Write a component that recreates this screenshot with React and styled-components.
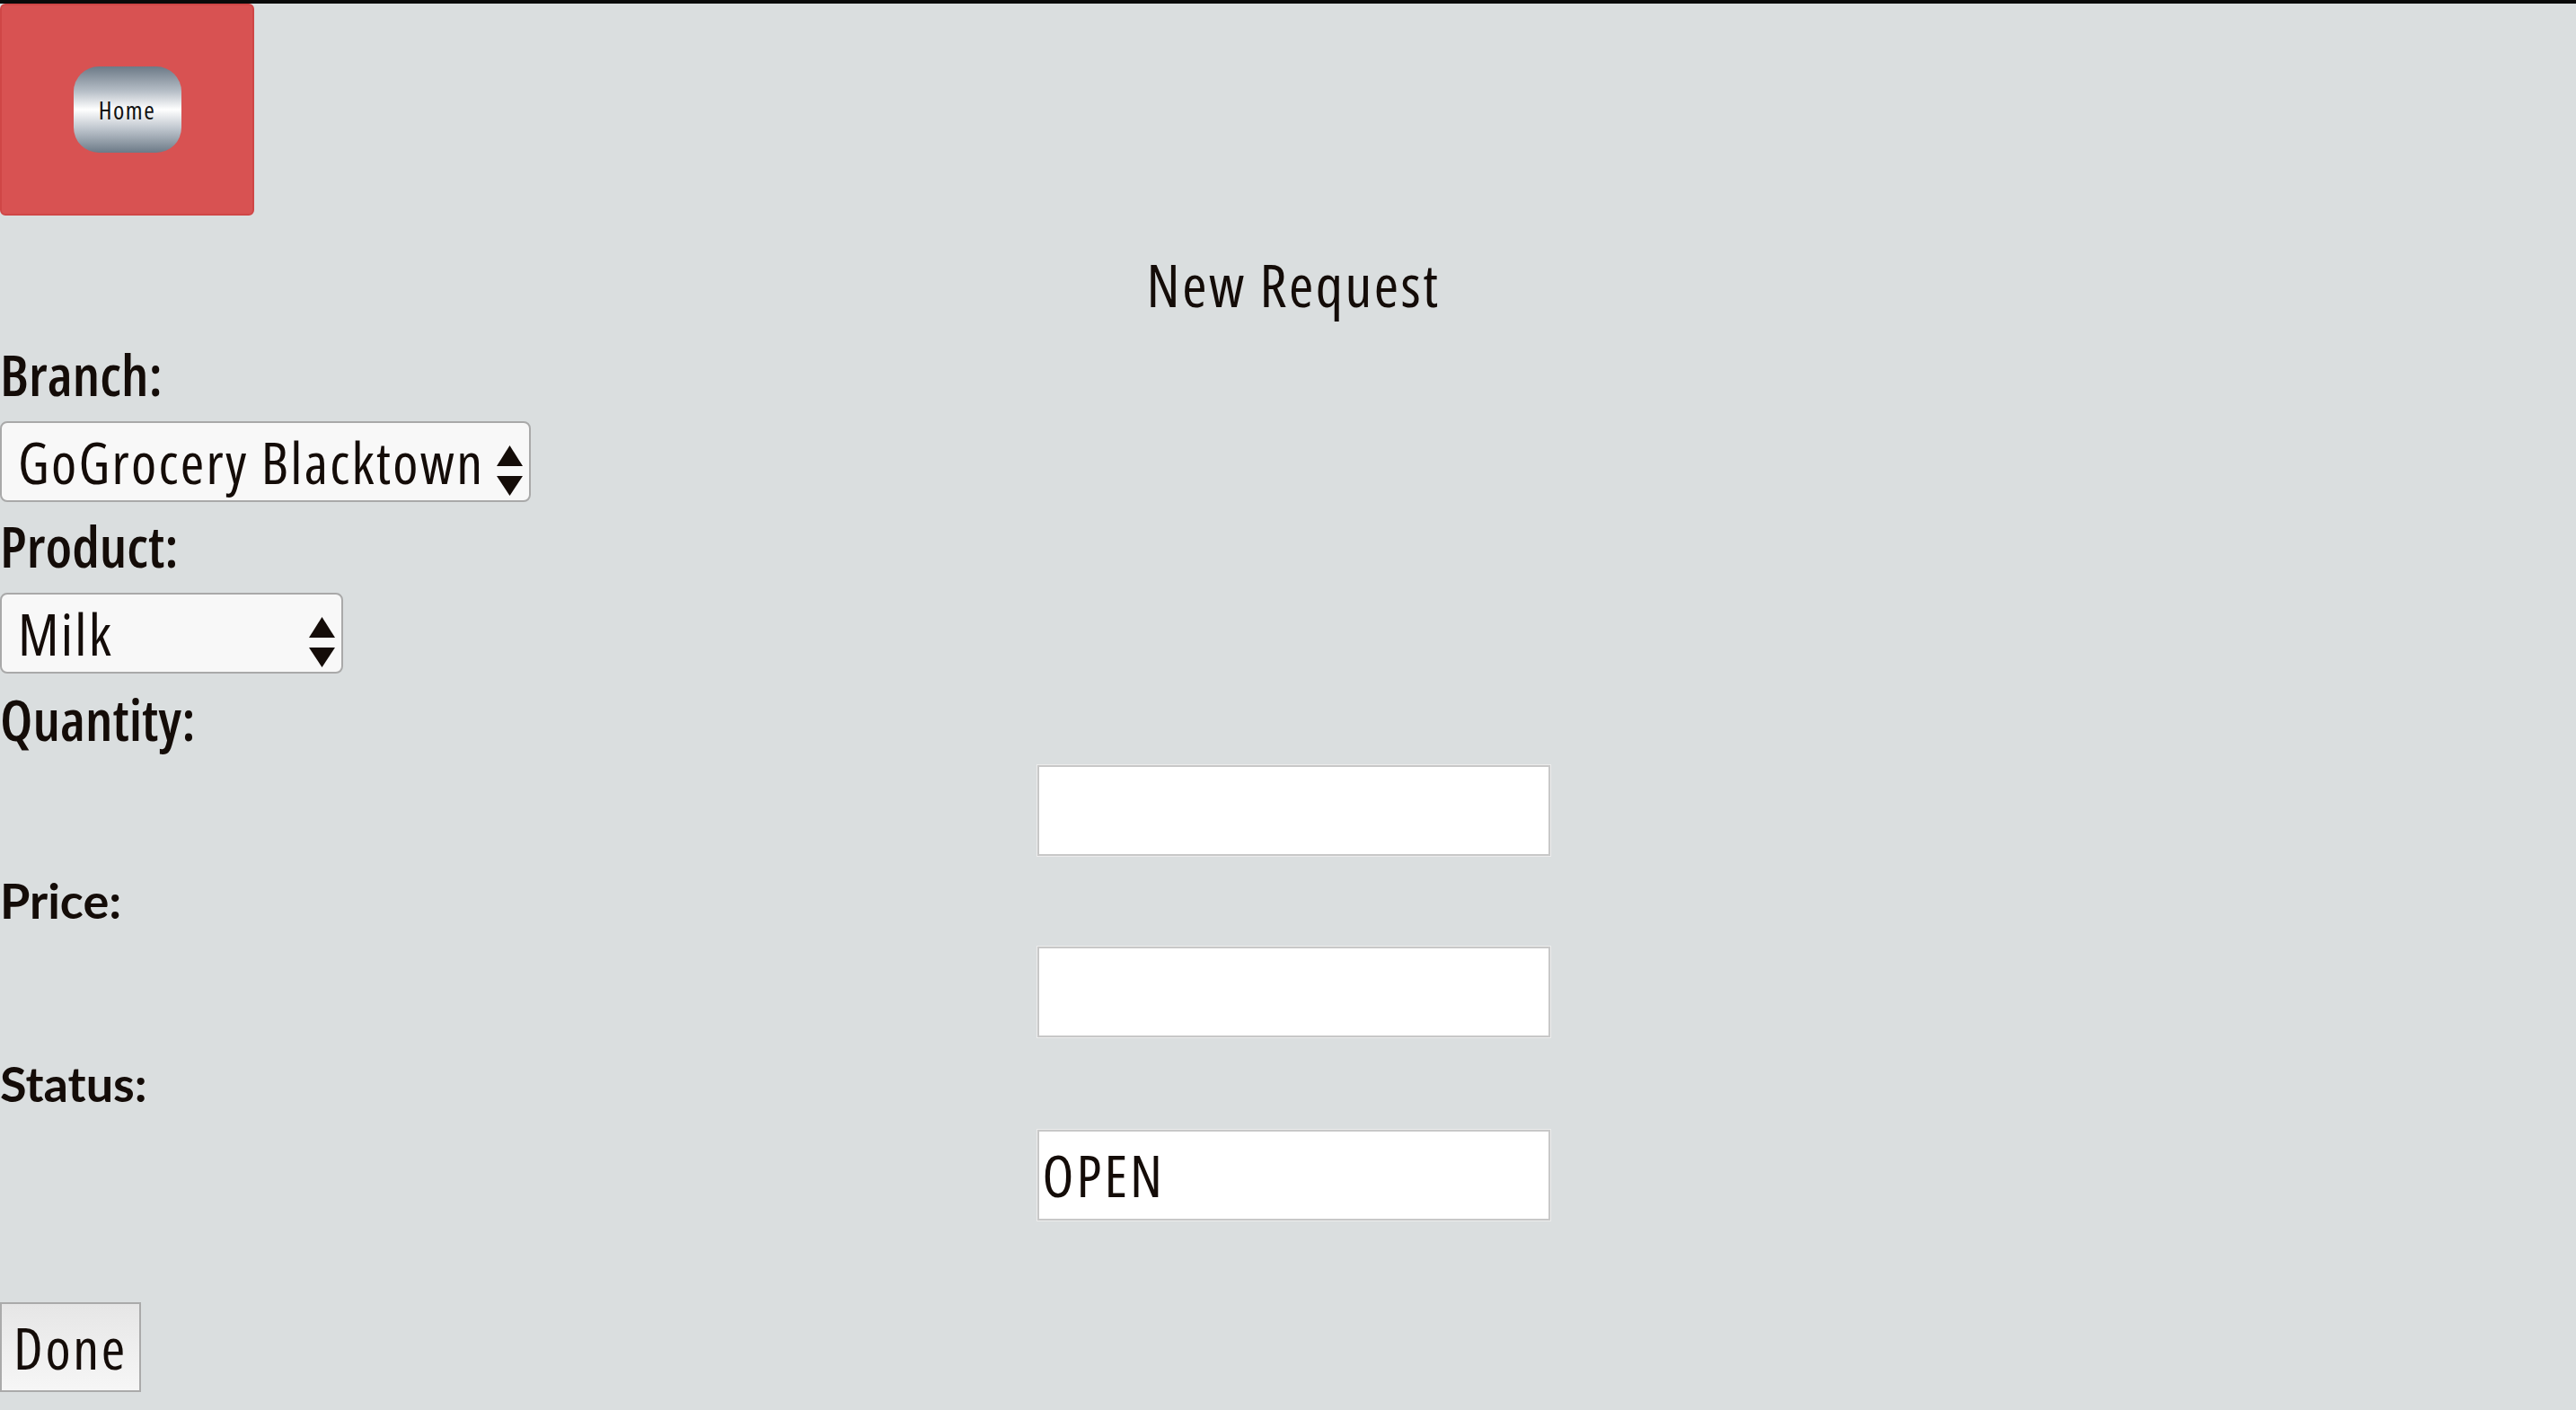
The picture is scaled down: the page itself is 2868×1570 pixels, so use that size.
import React from "react";
import styled, { createGlobalStyle } from "styled-components";

const NARROW = `"Open Sans", "DejaVu Sans Condensed", "Liberation Sans", sans-serif`;

const GlobalStyle = createGlobalStyle`
  html, body {
    margin: 0;
    padding: 0;
    background: #dadedf;
  }
  body {
    border-top: 4px solid #0a0a0a;
    min-height: 1566px;
    font-family: ${NARROW};
    font-stretch: 75%;
    color: #140c08;
  }
`;

const Page = styled.div`
  display: flex;
  flex-direction: column;
`;

const HeaderBox = styled.header`
  width: 283px;
  height: 236px;
  box-sizing: border-box;
  background: #d85252;
  border: 2px solid #cf4646;
  border-radius: 6px;
  display: flex;
  align-items: center;
  justify-content: center;
`;

const HomeButton = styled.button`
  width: 120px;
  height: 96px;
  border: none;
  border-radius: 28px;
  background: linear-gradient(
    to bottom,
    #6c7a87 0%,
    #b4bcc5 28%,
    #ffffff 50%,
    #bfc6ce 72%,
    #6c7a87 100%
  );
  font-family: ${NARROW};
  font-stretch: 75%;
  font-size: 28px;
  letter-spacing: 1.5px;
  color: #111;
  padding: 0;
  cursor: pointer;
`;

const Title = styled.h1`
  margin: 36px 0 0 12px;
  text-align: center;
  font-weight: 400;
  font-size: 66px;
  line-height: 80px;
  font-stretch: 75%;
  letter-spacing: 2.5px;
`;

const Form = styled.form`
  display: flex;
  flex-direction: column;
  align-items: flex-start;
  margin-top: 24px;
`;

const Label = styled.label`
  display: block;
  font-family: ${(p) => (p.$alt ? `Lato, "Liberation Sans", sans-serif` : NARROW)};
  font-stretch: ${(p) => (p.$alt ? "100%" : "75%")};
  font-weight: ${(p) => (p.$alt ? 700 : 600)};
  font-size: ${(p) => (p.$alt ? "54px" : "64px")};
  line-height: 74px;
  margin-top: ${(p) => p.$mt || 0}px;
`;

const SelectWrap = styled.div`
  position: relative;
  width: ${(p) => p.$w}px;
  height: 90px;
  margin-top: 15px;
`;

const Select = styled.select`
  appearance: none;
  -webkit-appearance: none;
  width: 100%;
  height: 100%;
  box-sizing: border-box;
  background: #f8f8f8;
  border: 2px solid #a9a9a9;
  border-radius: 8px;
  padding: 0 50px 0 18px;
  font-family: ${NARROW};
  font-stretch: 75%;
  font-size: 64px;
  letter-spacing: 2.3px;
  color: #140c08;
`;

const Arrows = styled.svg`
  position: absolute;
  right: 9px;
  top: 27px;
  width: 29px;
  height: 56px;
  pointer-events: none;
`;

const InputRow = styled.div`
  align-self: stretch;
  display: flex;
  justify-content: center;
  padding-left: 12px;
  margin-top: 14px;
`;

const TextInput = styled.input`
  width: 571px;
  height: 101px;
  box-sizing: border-box;
  background: #ffffff;
  border: 2px solid #c8c8c8;
  box-shadow: 0 0 0 1px #ececec;
  padding: 0 4px;
  font-family: ${NARROW};
  font-stretch: 75%;
  font-size: 64px;
  letter-spacing: 3px;
  color: #140c08;
  outline: none;
`;

const DoneButton = styled.button`
  margin-top: 91px;
  width: 157px;
  height: 100px;
  box-sizing: border-box;
  border: 2px solid #aaaaaa;
  background: linear-gradient(to bottom, #e6e6e6, #f6f6f6);
  font-family: ${NARROW};
  font-stretch: 75%;
  font-size: 64px;
  letter-spacing: 2.7px;
  color: #140c08;
  padding: 0;
  cursor: pointer;
`;

function SelectArrows() {
  return (
    <Arrows viewBox="0 0 29 56">
      <polygon points="14.5,0 29,23 0,23" fill="#140c08" />
      <polygon points="0,34 29,34 14.5,56" fill="#140c08" />
    </Arrows>
  );
}

export default function App() {
  return (
    <>
      <GlobalStyle />
      <Page>
        <HeaderBox>
          <HomeButton type="button">Home</HomeButton>
        </HeaderBox>
        <Title>New Request</Title>
        <Form onSubmit={(e) => e.preventDefault()}>
          <Label>Branch:</Label>
          <SelectWrap $w={591}>
            <Select defaultValue="blacktown">
              <option value="blacktown">GoGrocery Blacktown</option>
            </Select>
            <SelectArrows />
          </SelectWrap>
          <Label $mt={12}>Product:</Label>
          <SelectWrap $w={382}>
            <Select defaultValue="milk">
              <option value="milk">Milk</option>
            </Select>
            <SelectArrows />
          </SelectWrap>
          <Label $mt={14}>Quantity:</Label>
          <InputRow>
            <TextInput type="text" />
          </InputRow>
          <Label $alt $mt={13}>Price:</Label>
          <InputRow>
            <TextInput type="text" />
          </InputRow>
          <Label $alt $mt={15}>Status:</Label>
          <InputRow>
            <TextInput type="text" defaultValue="OPEN" />
          </InputRow>
          <DoneButton type="submit">Done</DoneButton>
        </Form>
      </Page>
    </>
  );
}
